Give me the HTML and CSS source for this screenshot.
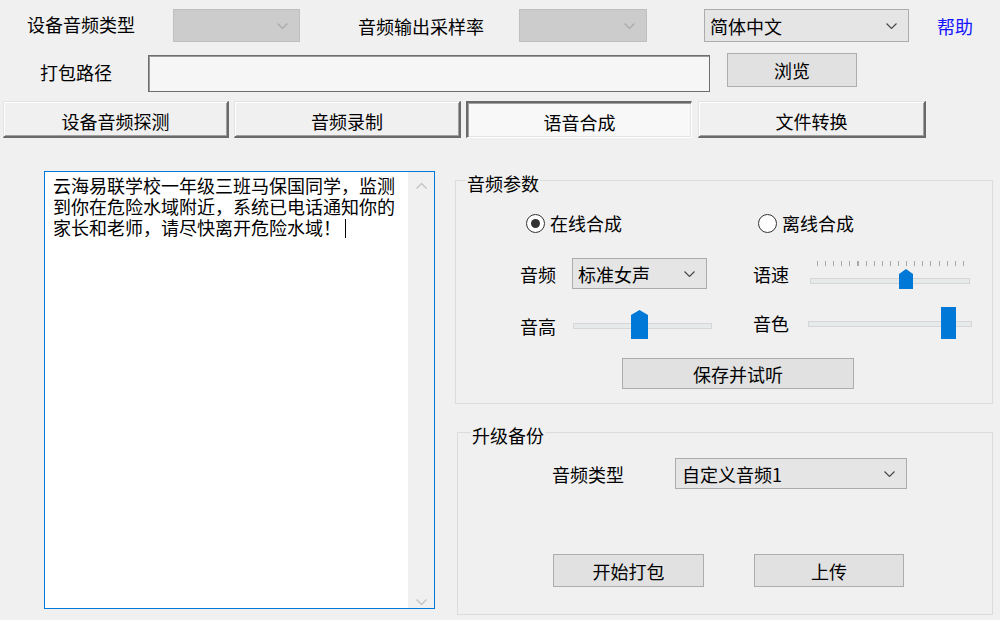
FILE: index.html
```html
<!DOCTYPE html>
<html lang="zh-CN">
<head>
<meta charset="utf-8">
<title>语音合成</title>
<link rel="stylesheet" href="styles.css">
</head>
<body>
<div class="app">
  <div class="row1">
    <span class="lbl lbl-type">设备音频类型</span>
    <div class="combo disabled c-dev"><span></span><svg class="chev" width="11" height="6" viewBox="0 0 11 6"><path d="M0.5 0.5 L5.5 5.5 L10.5 0.5" fill="none" stroke="#a8a8a8" stroke-width="1.1"/></svg></div>
    <span class="lbl lbl-rate">音频输出采样率</span>
    <div class="combo disabled c-rate"><span></span><svg class="chev" width="11" height="6" viewBox="0 0 11 6"><path d="M0.5 0.5 L5.5 5.5 L10.5 0.5" fill="none" stroke="#a8a8a8" stroke-width="1.1"/></svg></div>
    <div class="combo c-lang"><span>简体中文</span><svg class="chev" width="11" height="6" viewBox="0 0 11 6"><path d="M0.5 0.5 L5.5 5.5 L10.5 0.5" fill="none" stroke="#444" stroke-width="1.1"/></svg></div>
    <span class="help">帮助</span>
  </div>

  <div class="row2">
    <span class="lbl lbl-path">打包路径</span>
    <div class="path"></div>
    <div class="btn btn-browse">浏览</div>
  </div>

  <div class="tabs">
    <div class="tab t1">设备音频探测</div>
    <div class="tab t2">音频录制</div>
    <div class="tab t3 active">语音合成</div>
    <div class="tab t4">文件转换</div>
  </div>

  <div class="main">
    <div class="editor">
      <div class="text">
        <div class="line">云海易联学校一年级三班马保国同学，监测</div>
        <div class="line">到你在危险水域附近，系统已电话通知你的</div>
        <div class="line">家长和老师，请尽快离开危险水域！<span class="caret"></span></div>
      </div>
      <div class="vscroll">
        <svg width="11" height="6" viewBox="0 0 11 6"><path d="M0.5 5.5 L5.5 0.5 L10.5 5.5" fill="none" stroke="#c2c2c2" stroke-width="1.3"/></svg>
        <svg width="11" height="6" viewBox="0 0 11 6"><path d="M0.5 0.5 L5.5 5.5 L10.5 0.5" fill="none" stroke="#c2c2c2" stroke-width="1.3"/></svg>
      </div>
    </div>

    <div class="side">
      <fieldset class="group g1">
        <legend>音频参数</legend>
        <div class="radios">
          <div class="radio r1"><span class="dot checked"></span><span>在线合成</span></div>
          <div class="radio r2"><span class="dot"></span><span>离线合成</span></div>
        </div>
        <div class="row-voice">
          <span class="lbl l-voice">音频</span>
          <div class="combo c-voice"><span>标准女声</span><svg class="chev" width="11" height="6" viewBox="0 0 11 6"><path d="M0.5 0.5 L5.5 5.5 L10.5 0.5" fill="none" stroke="#444" stroke-width="1.1"/></svg></div>
          <span class="lbl l-speed">语速</span>
          <div class="slider s-speed">
            <div class="ticks"></div>
            <div class="track"></div>
            <div class="thumb arrow"></div>
          </div>
        </div>
        <div class="row-pitch">
          <span class="lbl l-pitch">音高</span>
          <div class="slider s-pitch">
            <div class="track"></div>
            <div class="thumb arrow"></div>
          </div>
          <span class="lbl l-tone">音色</span>
          <div class="slider s-tone">
            <div class="track"></div>
            <div class="thumb"></div>
          </div>
        </div>
        <div class="row-save">
          <div class="btn btn-save">保存并试听</div>
        </div>
      </fieldset>

      <fieldset class="group g2">
        <legend>升级备份</legend>
        <div class="row-type">
          <span class="lbl l-type">音频类型</span>
          <div class="combo c-type"><span>自定义音频1</span><svg class="chev" width="11" height="6" viewBox="0 0 11 6"><path d="M0.5 0.5 L5.5 5.5 L10.5 0.5" fill="none" stroke="#444" stroke-width="1.1"/></svg></div>
        </div>
        <div class="row-pack">
          <div class="btn btn-pack">开始打包</div>
          <div class="btn btn-upload">上传</div>
        </div>
      </fieldset>
    </div>
  </div>
</div>
</body>
</html>
```

FILE: styles.css
```css
html, body {
  margin: 0;
  padding: 0;
}
body {
  background: #f0f0f0;
  font-family: "Noto Sans CJK SC", "Noto Sans", sans-serif;
  font-size: 18px;
  line-height: 20px;
  color: #000;
  width: 1000px;
  height: 620px;
  overflow: hidden;
}
.lbl { white-space: nowrap; line-height: 20px; }

/* combo boxes */
.combo {
  box-sizing: border-box;
  height: 33px;
  border: 1px solid #acacac;
  background: #e5e5e5;
  display: flex;
  align-items: center;
  justify-content: space-between;
  padding: 0 11px 0 5px;
  line-height: 20px;
  white-space: nowrap;
}
.combo.disabled { background: #cccccc; border-color: #bfbfbf; }
.chev { flex: none; }

/* buttons */
.btn {
  box-sizing: border-box;
  border: 1px solid #adadad;
  background: #e1e1e1;
  display: flex;
  align-items: center;
  justify-content: center;
  line-height: 20px;
  white-space: nowrap;
}

/* row 1 */
.row1 {
  display: flex;
  align-items: center;
  height: 33px;
  margin-top: 9px;
}
.lbl-type { margin-left: 27px; margin-top: -3px; }
.c-dev { margin-left: 38px; width: 127px; }
.lbl-rate { margin-left: 58px; }
.c-rate { margin-left: 35px; width: 128px; }
.c-lang { margin-left: 57px; width: 205px; }
.help { margin-left: 28px; color: #1414ff; }

/* row 2 */
.row2 {
  display: flex;
  align-items: flex-start;
  margin-top: 11px;
  height: 39px;
}
.lbl-path { margin-left: 40px; margin-top: 9px; }
.path {
  margin-left: 36px;
  margin-top: 2px;
  width: 562px;
  height: 37px;
  box-sizing: border-box;
  border: 1px solid #6e6e6e;
  box-shadow: inset 1px 1px 0 #9a9a9a;
  background: #f6f6f6;
}
.btn-browse { margin-left: 17px; width: 130px; height: 34px; }

/* tabs */
.tabs {
  display: flex;
  margin-top: 9px;
  padding-left: 3px;
  gap: 5px;
  height: 37px;
}
.tab {
  box-sizing: border-box;
  border-style: solid;
  border-width: 1px 2px 2px 1px;
  border-color: #e3e3e3 #6a6a6a #6a6a6a #e3e3e3;
  box-shadow: inset 1px 1px 0 #fff, inset -1px -1px 0 #a0a0a0;
  background: #f0f0f0;
  display: flex;
  align-items: center;
  justify-content: center;
  padding-top: 3px;
  white-space: nowrap;
}
.t1 { width: 226px; }
.t2 { width: 227px; }
.t3 { width: 226px; }
.t4 { width: 228px; margin-left: 1px; }
.tab.active {
  border-width: 2px 1px 1px 2px;
  border-color: #6a6a6a #fff #fff #6a6a6a;
  box-shadow: inset 1px 1px 0 #a0a0a0, inset -1px -1px 0 #e3e3e3;
  background: #f8f8f8;
}

/* main */
.main {
  display: flex;
  align-items: flex-start;
}
.editor {
  margin-left: 44px;
  margin-top: 33px;
  width: 391px;
  height: 438px;
  box-sizing: border-box;
  border: 1px solid #0078d7;
  background: #fff;
  display: flex;
}
.text {
  flex: 1;
  padding: 3px 0 0 8px;
  white-space: nowrap;
}
.line { height: 21px; line-height: 21px; }
.caret {
  display: inline-block;
  width: 1px;
  height: 19px;
  background: #000;
  vertical-align: -3px;
  margin-left: 4px;
}
.vscroll {
  width: 26px;
  background: #f0f0f0;
  display: flex;
  flex-direction: column;
  justify-content: space-between;
  align-items: center;
  padding: 11px 0 3px;
  box-sizing: border-box;
}
.vscroll svg { display: block; }

.side {
  margin-left: 20px;
  margin-top: 29px;
  width: 538px;
}
fieldset.group {
  margin: 0;
  padding: 0;
  border: 1px solid #dcdcdc;
  box-sizing: border-box;
  min-width: 0;
}
fieldset.group legend {
  margin-left: 10px;
  padding: 6px 1px 0;
  line-height: 20px;
}
fieldset.g1 { height: 237px; }
fieldset.g2 { height: 196px; margin-top: 15px; margin-left: 2px; width: 536px; }
fieldset.g2 legend { margin-left: 13px; }

/* radios */
.radios {
  display: flex;
  align-items: center;
  height: 20px;
  margin-top: 20px;
}
.radio { display: flex; align-items: center; gap: 5px; white-space: nowrap; }
.r1 { margin-left: 70px; }
.r2 { margin-left: 136px; }
.dot {
  box-sizing: border-box;
  width: 19px;
  height: 19px;
  border: 1.5px solid #333;
  border-radius: 50%;
  background: #fff;
  display: flex;
  align-items: center;
  justify-content: center;
}
.dot.checked::after {
  content: "";
  width: 9px;
  height: 9px;
  border-radius: 50%;
  background: #333;
}

/* voice row */
.row-voice {
  display: flex;
  align-items: center;
  height: 32px;
  margin-top: 25px;
}
.l-voice { margin-left: 64px; }
.c-voice { margin-left: 16px; width: 135px; height: 31px; margin-bottom: 1px; }
.l-speed { margin-left: 46px; }
.slider { position: relative; align-self: stretch; }
.s-speed { margin-left: 21px; width: 160px; }
.ticks {
  margin: 3px 0 0 7px;
  width: 147px;
  height: 5px;
  background: repeating-linear-gradient(90deg, #a8a8a8 0 1px, transparent 1px 8.1px);
}
.track {
  box-sizing: border-box;
  height: 6px;
  background: #e7eaea;
  border: 1px solid #d6d6d6;
}
.s-speed .track { margin-top: 12px; }
.thumb {
  position: absolute;
  background: #0078d7;
}
.thumb.arrow {
  clip-path: polygon(50% 0, 100% 5px, 100% 100%, 0 100%, 0 5px);
}
.s-speed .thumb { left: 89px; top: 11px; width: 14px; height: 20px; }

/* pitch row */
.row-pitch {
  display: flex;
  align-items: center;
  height: 32px;
  margin-top: 17px;
}
.l-pitch { margin-left: 64px; margin-top: 6px; }
.s-pitch { margin-left: 17px; width: 139px; }
.s-pitch .track { margin-top: 16px; }
.s-pitch .thumb { left: 58px; top: 3px; width: 17px; height: 29px; }
.l-tone { margin-left: 41px; }
.s-tone { margin-left: 19px; width: 164px; }
.s-tone .track { margin-top: 14px; }
.s-tone .thumb { left: 133px; top: 0; width: 15px; height: 32px; }

.row-save { margin-top: 19px; display: flex; }
.btn-save { margin-left: 166px; width: 232px; height: 31px; }

/* upgrade group */
.row-type {
  display: flex;
  align-items: center;
  height: 31px;
  margin-top: 13px;
}
.l-type { margin-left: 94px; }
.c-type { margin-left: 51px; width: 232px; height: 31px; padding-left: 6px; }
.row-pack { display: flex; margin-top: 65px; }
.btn-pack { margin-left: 95px; width: 151px; height: 33px; }
.btn-upload { margin-left: 50px; width: 150px; height: 33px; }
```
